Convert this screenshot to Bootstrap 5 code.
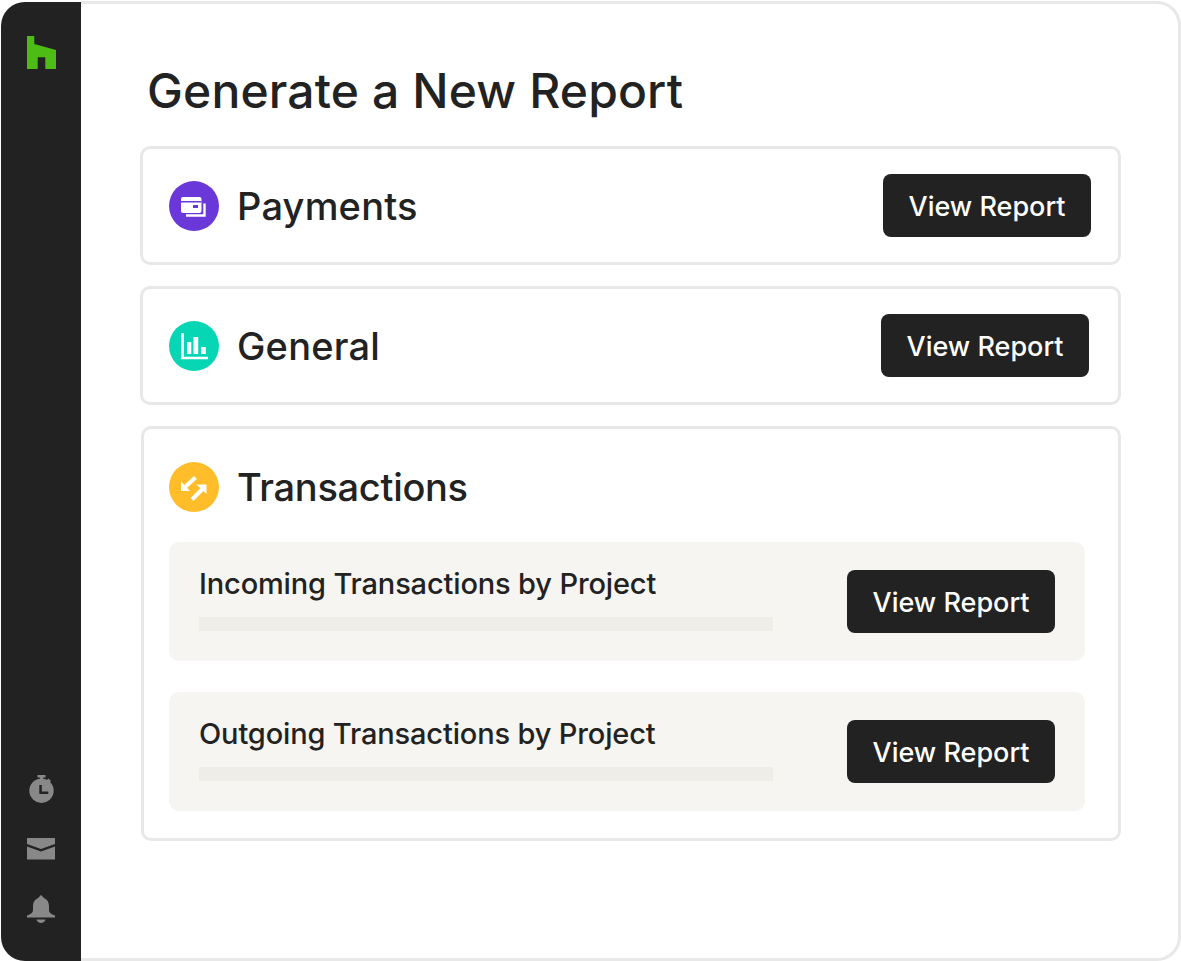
<!DOCTYPE html>
<html>
<head>
  <meta charset="utf-8">
  <link href="https://cdn.jsdelivr.net/npm/bootstrap@5.3.0/dist/css/bootstrap.min.css" rel="stylesheet">
  <style>
    html, body { height: 100%; background: #fff; }
    body { font-family: Inter, "Liberation Sans", sans-serif; color: #222; overflow: hidden; }
    .app-frame { width: 1180px; height: 960px; margin: 1px 0 0 1px; }
    .side-rail { width: 80px; background: #222; margin-top: 1px; padding: 34px 0 38px; flex: none; border-radius: 24px 0 0 24px; }
    .side-rail svg { display: block; }
    .rail-bottom { gap: 35px; }
    .main-pane { padding: 0 57px 0 59px; border: 3px solid #e8e8e8; border-left: 0; border-radius: 0 24px 24px 0; }
    .page-title { font-size: 48px; font-weight: 500; line-height: 56px; margin: 59px 0 27px 7px; letter-spacing: 0.15px; }
    .report-box { border: 3px solid #e8e8e8; border-radius: 10px; padding: 25px 27px 25px 26px; height: 119px; margin-bottom: 21px; }
    .box-shift { padding-right: 29px; }
    .tx-box { height: 415px; margin-left: 1px; padding: 33px 33px 0 25px; }
    .box-head { margin-bottom: 30px; }
    .icon-name { gap: 18px; }
    .box-name { font-size: 38px; font-weight: 500; letter-spacing: 0.2px; line-height: 50px; margin: 0; }
    .name-tight { letter-spacing: -0.3px; }
    .round-icon { width: 50px; height: 50px; flex: none; }
    .view-btn { width: 208px; height: 63px; background: #222; color: #fff; border: 0; border-radius: 8px; font-size: 27px; font-weight: 500; padding: 3px 0 0; }
    .view-btn:hover { background: #222; color: #fff; }
    .sub-list { gap: 31px; }
    .sub-row { background: #f6f5f1; border-radius: 10px; height: 119px; padding: 28px 30px; }
    .sub-name { font-size: 29px; font-weight: 500; line-height: 24px; margin: 0 0 21px; letter-spacing: -0.15px; }
    .sub-bar { width: 574px; height: 14px; background: #eeede8; }
  </style>
</head>
<body>
  <div class="app-frame d-flex">
    <div class="side-rail d-flex flex-column justify-content-between align-items-center">
      <svg width="29" height="33" viewBox="0 0 29 33"><path d="M0 0h7.300v8L29 14v19h-10.700V21.300h-7.600V33H0z" fill="#4dbc15"/></svg>
      <div class="rail-bottom d-flex flex-column align-items-center">
        <svg width="25" height="28" viewBox="0 0 25 28" fill="#888"><rect x="8.500" y="0" width="8" height="2.500"/><rect x="11" y="2" width="3" height="3"/><path d="M19.500 3.500l2.500 2.500-2 2-2.500-2.500z"/><path d="M12.500 3.500a12.200 12.200 0 1 0 0 24.400 12.200 12.200 0 0 0 0-24.400z"/><path d="M10.300 10h2.500v6.500h6.500V19h-9z" fill="#222"/></svg>
        <svg width="28" height="22" viewBox="0 0 28 22" fill="#888"><path d="M0 0h28v6L14 11 0 6z"/><path d="M0 8.500l14 5 14-5V21.500H0z"/></svg>
        <svg width="28" height="28" viewBox="0 0 28 28" fill="#888"><path d="M14 0l3 3c3.500 1.500 5 4.500 5 8v4c0 3 3 4.500 6 5.500v2H0v-2c3-1 6-2.500 6-5.500v-4c0-3.500 1.500-6.500 5-8z"/><path d="M9.500 24.500h9c-1 4.500-8 4.500-9 0z"/></svg>
      </div>
    </div>
    <div class="main-pane flex-grow-1">
      <h1 class="page-title">Generate a New Report</h1>
      <div class="report-box d-flex align-items-center justify-content-between">
        <div class="icon-name d-flex align-items-center">
          <svg class="round-icon" viewBox="0 0 50 50"><circle cx="25" cy="25" r="25" fill="#6a38d9"/><rect x="12" y="16" width="20.500" height="16" rx="2" fill="#fff"/><path d="M12 20h20.500v1.500H12z" fill="#6a38d9"/><path d="M24 24h5v3h-5z" fill="#6a38d9"/><path d="M35.500 22.500V34.500H17" fill="none" stroke="#fff" stroke-width="2.400"/></svg>
          <h2 class="box-name">Payments</h2>
        </div>
        <button type="button" class="btn view-btn">View Report</button>
      </div>
      <div class="report-box box-shift d-flex align-items-center justify-content-between">
        <div class="icon-name d-flex align-items-center">
          <svg class="round-icon" viewBox="0 0 50 50"><circle cx="25" cy="25" r="25" fill="#06d6b4"/><path d="M13.500 12v25H39" fill="none" stroke="#fff" stroke-width="2.600"/><path d="M18 21h4.300v12H18zM24.500 16h4.700v17h-4.700zM32 26h4.800v7H32z" fill="#fff"/></svg>
          <h2 class="box-name">General</h2>
        </div>
        <button type="button" class="btn view-btn">View Report</button>
      </div>
      <div class="report-box tx-box">
        <div class="box-head icon-name d-flex align-items-center">
          <svg class="round-icon" viewBox="0 0 50 50"><circle cx="25" cy="25" r="25" fill="#ffbd2a"/><path d="M26.500 15.500L16 25" fill="none" stroke="#fff" stroke-width="4"/><path d="M12 19.500V29h9z" fill="#fff"/><path d="M23 37.500L33.500 27" fill="none" stroke="#fff" stroke-width="4"/><path d="M27.500 22.500H37.500V32z" fill="#fff"/></svg>
          <h2 class="box-name name-tight">Transactions</h2>
        </div>
        <div class="sub-list d-flex flex-column">
          <div class="sub-row d-flex align-items-center justify-content-between">
            <div><p class="sub-name">Incoming Transactions by Project</p><div class="sub-bar"></div></div>
            <button type="button" class="btn view-btn">View Report</button>
          </div>
          <div class="sub-row d-flex align-items-center justify-content-between">
            <div><p class="sub-name">Outgoing Transactions by Project</p><div class="sub-bar"></div></div>
            <button type="button" class="btn view-btn">View Report</button>
          </div>
        </div>
      </div>
    </div>
  </div>
  <script src="https://cdn.jsdelivr.net/npm/bootstrap@5.3.0/dist/js/bootstrap.bundle.min.js"></script>
</body>
</html>
